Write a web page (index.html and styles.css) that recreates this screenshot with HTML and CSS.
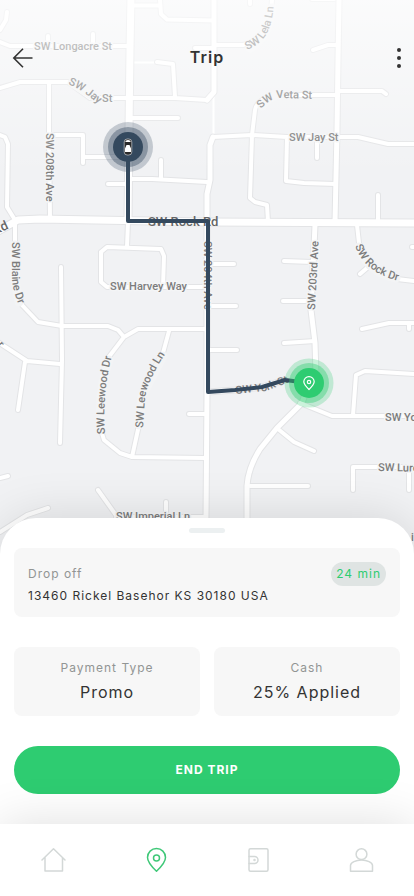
FILE: index.html
```html
<!DOCTYPE html>
<html lang="en">
<head>
<meta charset="utf-8">
<meta name="viewport" content="width=device-width, initial-scale=1">
<title>Trip</title>
<link rel="stylesheet" href="styles.css">
</head>
<body>
<div class="app">
  <section class="map" aria-label="Map">
    <svg class="map-canvas" viewBox="0 0 414 560" preserveAspectRatio="xMidYMin slice" aria-hidden="true">
      <defs>
        <linearGradient id="fade" x1="0" y1="0" x2="0" y2="1">
          <stop offset="0" stop-color="#fff" stop-opacity=".7"/>
          <stop offset="1" stop-color="#fff" stop-opacity="0"/>
        </linearGradient>
        <g id="minor">
          <path d="M7 12L6 20L0 30M0 42L10 46H130M48 46V36M93 46V34M131 5.500H160M160 0L161 14L167 19.500L214 20.500M195 48H214M214 45H243C262 41 271 24 272 0M250 0V4"/>
          <path d="M157 62L173 64L175 97M0 88L20 82H68L90 98H175L207 100M49 82V135L50 219M49 135H83V163M83 157H128M131 118H178M0 135L5 137L8 144L7 207L15 220"/>
          <path d="M130 179L152 179L207 182M161 160V179M108 184H128M313 50L328 45H338M338 95H273Q256 101 255 110L252 135L250 198L255 202L267 205L268 222"/>
          <path d="M338 91H382L386 94M213 137L252 135L287 137H358L388 144H414M287 137L286 181L304 183L336 184M317 143V158M312 -1H334M378 195V222"/>
          <path d="M357 225L359 243L367 263Q378 275 397 279L414 281M360 274L367 268M412 247H414M362 329L389 323H414M409 323V329"/>
          <path d="M284 261L312 262M283 301H311M284 343L315 341M208 264H234M208 306H236M208 350H237M189 414H206"/>
          <path d="M128 222L127 247M101 252L107 247L161 249L164 256L163 287M101 252V282L107 287H207M61 267L62 360L60 443"/>
          <path d="M15 222V280L22 305L38 322L62 326H108L118 330L124 337L138 329H207M124 337L108 358Q98 388 101 430L104 440L120 453L132 457L206 458M169 331L163 353L145 385L139 425L132 457"/>
          <path d="M-2 342L27 361L60 364M25 362L18 410M0 478L8 476M48 508L27 515L0 532M98 490L118 518M166 502V516M116 517H206"/>
          <path d="M300 403L332 416H414M278 429L294 442L314 451M250 486H308M353 415L356 375L365 371L414 374M353 490V467H414M409 470V490"/>
        </g>
        <g id="medium">
          <path d="M214 0V92L207 100M213 137L210 145L210 180L207 194V392L206 518M339 0L338 60L337 130L335 222M315 225L314 247L311 310L315 343L316 375M309 383L302 403L277 428L260 449Q248 468 247 486V540M208 392L235 390L262 387L285 380"/>
        </g>
        <g id="major">
          <path d="M131 -4L130 50L129 130L128 220M-2 231L18 220L40 219L207 222L414 223"/>
        </g>
        <path id="jay" d="M68 84Q82 90 92 99L110 112"/>
        <path id="lela" d="M247 50Q262 44 268 31Q273 20 274 2"/>
        <path id="veta" d="M261 109Q271 97 284 98L314 99"/>
        <path id="blaine" d="M12 242V276Q12 290 20 308"/>
        <path id="rockdr" d="M355 246Q365 274 403 282"/>
        <path id="leedr" d="M105 434Q102 390 113 352"/>
        <path id="leeln" d="M143 428L145 398Q148 379 168 350"/>
        <path id="york" d="M236 394L266 391L290 382"/>
      </defs>
      <rect class="land" width="414" height="560"/>
      <path class="lane" d="M131 62.500H157M213.500 97V137"/>
      <g class="casing">
        <use href="#minor" class="w-minor"/><use href="#medium" class="w-medium"/><use href="#major" class="w-major"/>
      </g>
      <g class="road">
        <use href="#minor" class="w-minor"/><use href="#medium" class="w-medium"/><use href="#major" class="w-major"/>
      </g>
      <path class="label-gap" d="M72 83L96 98M250 48Q268 38 272 8M262 106Q270 95 280 95M15 245V280L19 302M359 247Q367 272 396 278M101 430Q98 390 109 360M139 425L142 396L163 356"/>
      <g class="street">
        <text class="halo" x="34" y="50">SW Longacre St</text>
        <text class="halo" x="102" y="102">St</text>
        <text><textPath href="#jay">SW Jay</textPath></text>
        <text><textPath href="#lela">SW Lela Ln</textPath></text>
        <text><textPath href="#veta">SW Veta St</textPath></text>
        <text class="halo" x="289" y="141">SW Jay St</text>
        <text class="halo" transform="translate(46 133) rotate(90)">SW 208th Ave</text>
        <text class="big" transform="translate(-5 235) rotate(-25)">Rd</text>
        <text class="big" x="148" y="226">SW Rock Rd</text>
        <text class="halo" transform="translate(204 241) rotate(90)">SW 204th Ave</text>
        <text class="halo" transform="translate(315 310) rotate(-87)">SW 203rd Ave</text>
        <text><textPath href="#blaine">SW Blaine Dr</textPath></text>
        <text><textPath href="#rockdr">SW Rock Dr</textPath></text>
        <text class="halo" x="110" y="290">SW Harvey Way</text>
        <text><textPath href="#leedr">SW Leewood Dr</textPath></text>
        <text><textPath href="#leeln">SW Leewood Ln</textPath></text>
        <text><textPath href="#york">SW York St</textPath></text>
        <text class="halo" x="385" y="421">SW York St</text>
        <text class="halo" x="378" y="471" transform="rotate(1 378 471)">SW Lureen Dr</text>
        <text class="halo" x="116" y="520">SW Imperial Ln</text>
        <text transform="translate(-3 345) rotate(50)">r</text>
        <text x="411" y="541">i</text>
      </g>
      <rect width="414" height="175" fill="url(#fade)"/>
      <circle class="origin-halo" cx="128" cy="147" r="25"/>
      <circle class="origin-halo mid" cx="128" cy="147" r="20"/>
      <circle class="target-halo" cx="309" cy="383" r="24.500"/>
      <path class="route" d="M128 147V221H208V392L235 390L262 387L285 380L309 383"/>
      <circle class="origin" cx="128" cy="147" r="15"/>
      <g class="car">
        <rect class="car-body" x="124.200" y="139" width="7.600" height="16" rx="3"/>
        <path class="car-roof" d="M125.500 141Q128 139 130.500 141V142H125.500ZM126.500 145H129.500L131 148.500V152H125V148.500Z"/>
      </g>
      <circle class="target-halo mid" cx="309" cy="383" r="20"/>
      <circle class="target" cx="309" cy="383" r="15"/>
      <path class="target-pin" d="M309 389.500C306 386.500 303.800 384.300 303.800 381.800A5.200 5.200 0 0 1 314.200 381.800C314.200 384.300 312 386.500 309 389.500Z"/>
      <circle class="target-pin" cx="309" cy="382" r="1.700"/>
    </svg>
    <header class="topbar">
      <button class="icon-button" type="button" aria-label="Back">
        <svg width="22" height="22" viewBox="0 0 22 22"><path d="M20.500 11H2M11 1.800L1.800 11L11 20.200"/></svg>
      </button>
      <h1>Trip</h1>
      <button class="icon-button more" type="button" aria-label="More options">
        <svg width="6" height="22" viewBox="0 0 6 22"><circle cx="3" cy="3" r="2"/><circle cx="3" cy="11" r="2"/><circle cx="3" cy="19" r="2"/></svg>
      </button>
    </header>
  </section>

  <main class="sheet">
    <div class="handle"></div>
    <section class="card drop">
      <div class="drop-head">
        <span class="label">Drop off</span>
        <span class="eta">24 min</span>
      </div>
      <p class="address">13460 Rickel Basehor KS 30180 USA</p>
    </section>
    <div class="pair">
      <section class="card pay">
        <span class="label">Payment Type</span>
        <p class="value">Promo</p>
      </section>
      <section class="card pay">
        <span class="label">Cash</span>
        <p class="value">25% Applied</p>
      </section>
    </div>
    <button class="end" type="button">END TRIP</button>
  </main>

  <nav class="tabs" aria-label="Main">
    <a href="#home" aria-label="Home"><svg viewBox="0 0 26 26"><path d="M2 13L13.500 1.800L25 13M5 10.500V24H22.500V10.500"/></svg></a>
    <a class="active" href="#trip" aria-label="Trip"><svg viewBox="0 0 26 26"><path d="M13.500 24.200C9 20 4.500 15.500 4.500 10.500A9 9 0 0 1 22.500 10.500C22.500 15.500 18 20 13.500 24.200Z"/><circle cx="13.500" cy="11" r="3"/></svg></a>
    <a href="#wallet" aria-label="Wallet"><svg viewBox="0 0 26 26"><rect x="4" y="1.800" width="19" height="22.500" rx="1.500"/><path d="M4 9.500H9.500A3.500 3.500 0 0 1 9.500 16.500H4"/><circle cx="9.500" cy="13" r=".5"/></svg></a>
    <a href="#profile" aria-label="Profile"><svg viewBox="0 0 26 26"><circle cx="13.500" cy="7.200" r="5.400"/><path d="M2.500 24.200V18.500C2.500 15.500 8 13 13.500 13S24.500 15.500 24.500 18.500V24.200Z"/></svg></a>
  </nav>
</div>
</body>
</html>
```
FILE: styles.css
```css
* { box-sizing: border-box; }

body {
  margin: 0;
  font-family: Inter, "Liberation Sans", sans-serif;
  color: #333;
  background: #fff;
}

h1, p { margin: 0; }
button { font: inherit; border: 0; cursor: pointer; }

.app {
  min-height: 100vh;
  display: flex;
  flex-direction: column;
}

/* Map */
.map {
  position: relative;
  flex: 1;
  min-height: 320px;
  overflow: hidden;
  background: #f1f2f4;
}

.map-canvas {
  position: absolute;
  inset: 0;
  width: 100%;
  height: 100%;
}

.land { fill: #f1f2f4; }
.casing, .road, .lane, .route, .label-gap {
  fill: none;
  stroke-linecap: round;
  stroke-linejoin: round;
}
.casing { stroke: #e3e4e6; }
.road { stroke: #fff; }
.lane { stroke: #fff; stroke-width: 2px; }
.label-gap { stroke: #f3f4f5; stroke-width: 9px; }
.casing .w-minor { stroke-width: 6px; }
.casing .w-medium { stroke-width: 7px; }
.casing .w-major { stroke-width: 9px; }
.road .w-minor { stroke-width: 4px; }
.road .w-medium { stroke-width: 5px; }
.road .w-major { stroke-width: 7px; }

.street {
  font: 500 11px Roboto, "Liberation Sans", sans-serif;
  fill: #7c7c7c;
}
.street .halo {
  stroke: #f4f5f6;
  stroke-width: 3px;
  stroke-linejoin: round;
  paint-order: stroke;
}
.street .big { font-size: 13px; fill: #666; }

.route { stroke: #34495e; stroke-width: 4px; }
.origin { fill: #34495e; }
.origin-halo { fill: #34495e; fill-opacity: .25; }
.origin-halo.mid { fill-opacity: .4; }
.target { fill: #2ecc71; }
.target-halo { fill: #2ecc71; fill-opacity: .25; }
.target-halo.mid { fill-opacity: .4; }
.target-pin { fill: none; stroke: #fff; stroke-width: 1.2px; }
.car-body { fill: #2b2b2b; stroke: #e8e8e8; stroke-width: .6px; }
.car-roof { fill: #fff; }

.topbar {
  position: relative;
  padding: 46px 12px 0;
  display: flex;
  justify-content: space-between;
  align-items: flex-start;
}
.topbar h1 {
  font-size: 16px;
  line-height: 22px;
  font-weight: 600;
  letter-spacing: 1px;
}
.icon-button {
  width: 22px;
  height: 24px;
  padding: 0;
  display: flex;
  align-items: center;
  background: none;
}
.icon-button svg { fill: none; stroke: #333; stroke-width: 1.6px; }
.icon-button.more { justify-content: flex-end; }
.icon-button.more svg { fill: #333; stroke: none; }

/* Trip sheet */
.sheet {
  position: relative;
  margin-top: -42px;
  padding: 10px 14px 30px;
  display: flex;
  flex-direction: column;
  gap: 30px;
  background: #fff;
  border-radius: 36px 36px 0 0;
  box-shadow: 0 0 50px rgba(0, 0, 0, .13);
}
.handle {
  width: 36px;
  height: 5px;
  margin: 0 auto -15px;
  border-radius: 3px;
  background: #ecf0f1;
}
.card {
  border-radius: 8px;
  background: #f7f7f7;
}
.label {
  font-size: 12px;
  line-height: 16px;
  letter-spacing: 1px;
  color: #929594;
}
.drop { padding: 14px 14px 13px; }
.drop-head {
  display: flex;
  justify-content: space-between;
  align-items: center;
}
.eta {
  padding: 0 5px;
  font-size: 12px;
  line-height: 24px;
  letter-spacing: 1px;
  color: #2ecc71;
  border-radius: 12px;
  background: #dfe4e3;
}
.address {
  padding-top: 2px;
  font-size: 12px;
  line-height: 16px;
  letter-spacing: 1px;
}
.pair {
  display: grid;
  grid-template-columns: 1fr 1fr;
  gap: 14px;
}
.pay {
  padding: 13px 8px 12px;
  display: flex;
  flex-direction: column;
  align-items: center;
  gap: 4px;
}
.value {
  font-size: 16px;
  line-height: 24px;
  letter-spacing: 1px;
}
.end {
  height: 48px;
  padding: 0 16px 2px;
  border-radius: 24px;
  font-size: 12px;
  font-weight: 700;
  letter-spacing: 1px;
  color: #fff;
  background: #2ecc71;
}

/* Tab bar */
.tabs {
  position: relative;
  height: 72px;
  padding: 0 2px;
  display: grid;
  grid-template-columns: repeat(4, 1fr);
  align-items: center;
  justify-items: center;
  background: #fff;
  box-shadow: 0 0 50px rgba(0, 0, 0, .13);
}
.tabs a { display: flex; color: #d3d8d7; }
.tabs a.active { color: #3fc878; }
.tabs svg {
  width: 26px;
  height: 26px;
  fill: none;
  stroke: currentColor;
  stroke-width: 1.5px;
  stroke-linejoin: round;
  stroke-linecap: round;
}
```
